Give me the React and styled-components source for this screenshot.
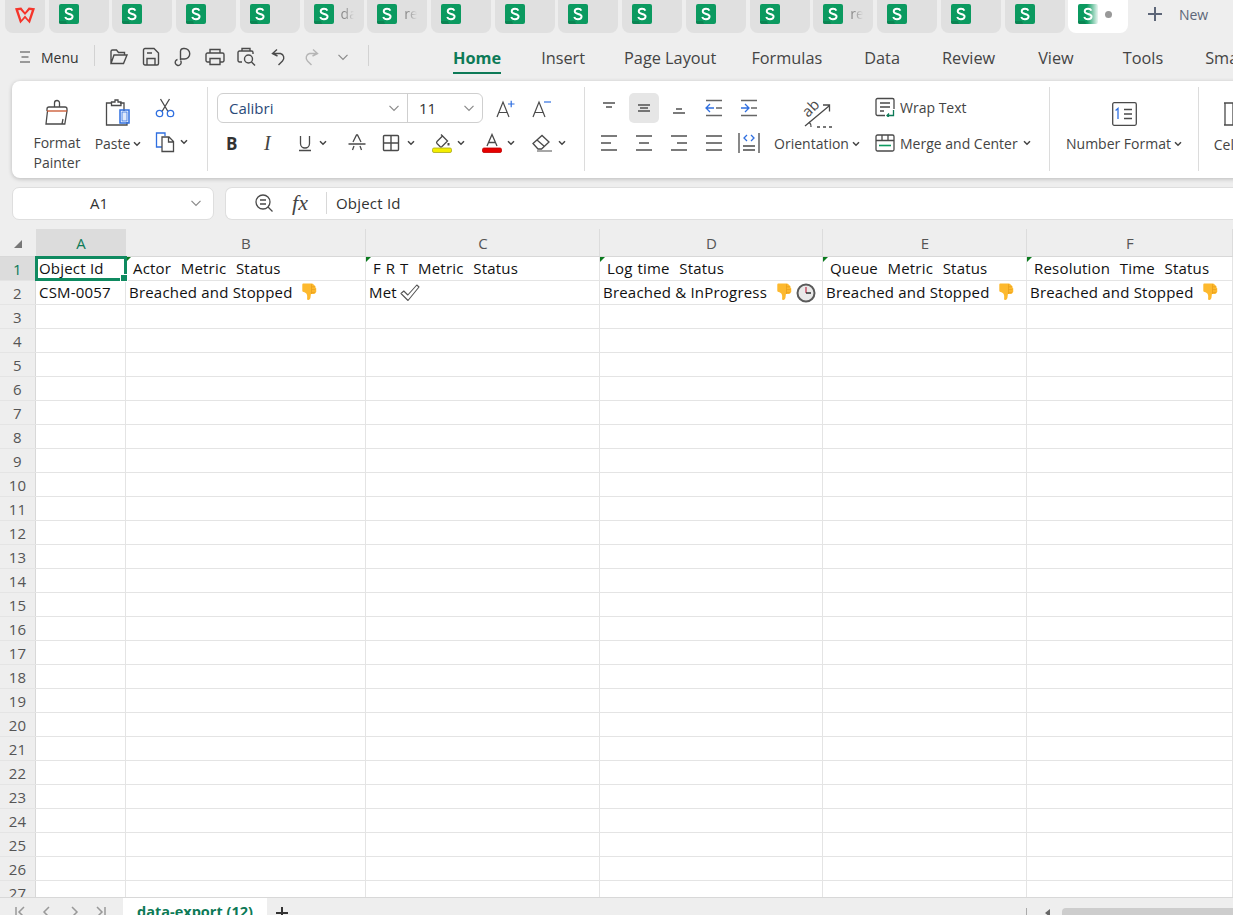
import styled, { createGlobalStyle } from "styled-components";

const GlobalStyle = createGlobalStyle`
  html, body {
    margin: 0;
    padding: 0;
    background: #eeeeee;
    overflow: hidden;
  }
  * {
    box-sizing: border-box;
  }
  svg {
    display: block;
    flex: none;
  }
`;

const UI_FONT = `"Open Sans", "Noto Sans", sans-serif`;

// Page

const Page = styled.div`
  width: 1233px;
  height: 915px;
  overflow: hidden;
  display: flex;
  flex-direction: column;
  background: #eeeeee;
  font-family: ${UI_FONT};
  color: #444;
`;

// Window tabs

const TabBar = styled.div`
  height: 33px;
  flex: none;
  display: flex;
  gap: 3.72px;
  padding-left: 5px;
  align-items: stretch;
`;

const Tab = styled.div`
  width: ${(props) => props.$w || 60}px;
  flex: none;
  display: flex;
  align-items: flex-start;
  padding: 4px 0 0 10px;
  background: ${(props) => (props.$active ? "#fff" : "#e0e0e0")};
  border-radius: 0 0 8px 8px;
  position: relative;
  overflow: hidden;
`;

const LogoWrap = styled.span`
  margin-top: 3px;
`;

const TabLabel = styled.span`
  font-size: 14px;
  line-height: 20px;
  margin-left: 7px;
  width: 13px;
  overflow: hidden;
  color: #8c8c8c;
  mask-image: linear-gradient(90deg, #000 30%, transparent);
`;

const FadeOver = styled.div`
  position: absolute;
  left: 19px;
  top: 4px;
  width: 12px;
  height: 20px;
  background: linear-gradient(90deg, rgba(255, 255, 255, 0), #fff);
`;

const Dot = styled.span`
  position: absolute;
  left: 37px;
  top: 11px;
  width: 7px;
  height: 7px;
  border-radius: 50%;
  background: #999;
`;

const NewTab = styled.div`
  display: flex;
  align-items: center;
  height: 28px;
  margin-left: 15px;
  gap: 16px;
  font-size: 14px;
  color: #5d6678;
`;

// Menu row

const MenuRow = styled.div`
  height: 45px;
  flex: none;
  display: flex;
  align-items: center;
  padding-left: 19px;
  font-size: 16px;
`;

const MenuButton = styled.div`
  width: 75px;
  flex: none;
  display: flex;
  align-items: center;
  gap: 10px;
  padding-top: 3px;
  font-size: 14px;
  color: #333;
`;

const VDivider = styled.div`
  width: 1px;
  height: 21px;
  flex: none;
  background: #d2d2d2;
`;

const QuickTools = styled.div`
  width: 273px;
  flex: none;
  display: flex;
  align-items: center;
  padding: 2px 0 0 8px;
`;

const QuickSlot = styled.div`
  width: 32px;
  flex: none;
  display: flex;
  justify-content: center;
`;

const RibbonTabs = styled.div`
  display: flex;
  margin-left: 84px;
  white-space: nowrap;
`;

const RibbonTab = styled.div`
  position: relative;
  height: 45px;
  line-height: 51px;
  margin-left: ${(props) => props.$gap ?? 0}px;
  font-size: 16.3px;
  font-weight: ${(props) => (props.$active ? 700 : 400)};
  color: ${(props) => (props.$active ? "#0d7a57" : "#444")};
  &::after {
    content: "";
    display: ${(props) => (props.$active ? "block" : "none")};
    position: absolute;
    left: 0;
    right: 0;
    bottom: 4px;
    height: 2px;
    background: #0d7a57;
  }
`;

// Ribbon

const Ribbon = styled.div`
  height: 97px;
  flex: none;
  margin: 3px 0 0 12px;
  width: 1260px;
  display: flex;
  background: #fff;
  border-radius: 8px;
  box-shadow: 0 1px 4px rgba(0, 0, 0, 0.22);
  padding: 6px 0 7px;
  font-size: 14px;
  color: #444;
  white-space: nowrap;
`;

const Group = styled.div`
  width: ${(props) => props.$w}px;
  flex: none;
  display: flex;
  border-right: ${(props) => (props.$last ? "none" : "1px solid #dcdcdc")};
  padding: ${(props) => props.$pad || "0"};
`;

const BigTool = styled.div`
  width: ${(props) => props.$w}px;
  flex: none;
  margin-left: ${(props) => props.$ml ?? 0}px;
  display: flex;
  flex-direction: column;
  align-items: center;
  text-align: center;
  line-height: 20px;
  padding-top: 11px;
`;

const BigIcon = styled.div`
  height: 32px;
  margin-bottom: 5px;
  display: flex;
  align-items: center;
  justify-content: center;
`;

const Labelled = styled.div`
  display: flex;
  align-items: center;
  gap: ${(props) => props.$gap ?? 3}px;
  height: 20px;
`;

const BigLabel = styled(Labelled)`
  margin-top: -1px;
`;

const SmallStack = styled.div`
  display: flex;
  flex-direction: column;
  gap: 14px;
  margin-left: 6px;
  padding-top: 11px;
  align-items: flex-start;
`;

const FontColumn = styled.div`
  display: flex;
  flex-direction: column;
  gap: 10px;
  padding-top: 6px;
`;

const FontTop = styled.div`
  display: flex;
  align-items: center;
`;

const FontSelect = styled.div`
  width: 266px;
  height: 30px;
  display: grid;
  grid-template-columns: 190px 1fr;
  border: 1px solid #cfcfcf;
  border-radius: 6px;
  margin-right: 13px;
`;

const SelectCell = styled.div`
  display: flex;
  align-items: center;
  justify-content: space-between;
  padding: 0 6px 0 ${(props) => props.$pad}px;
  border-right: ${(props) => (props.$divided ? "1px solid #cfcfcf" : "none")};
  color: ${(props) => props.$color || "#333"};
  font-size: 15px;
`;

const FontSizeTools = styled.div`
  display: flex;
  gap: 17px;
`;

const FontBottom = styled.div`
  display: flex;
  align-items: center;
  height: 20px;
  padding-left: 9px;
`;

const FontTool = styled.div`
  width: ${(props) => props.$w}px;
  flex: none;
  display: flex;
  align-items: center;
  gap: ${(props) => props.$gap ?? 5}px;
`;

const BoldGlyph = styled(FontTool)`
  font-weight: 700;
  font-size: 17px;
  color: #333;
`;

const ItalicGlyph = styled(FontTool)`
  font-family: "Liberation Serif", serif;
  font-style: italic;
  font-size: 20px;
`;

const AlignGrid = styled.div`
  display: grid;
  grid-template-columns: repeat(5, 30px);
  column-gap: 5px;
  row-gap: 5px;
  padding-top: 6px;
  align-content: start;
`;

const AlignCell = styled.div`
  height: 30px;
  display: flex;
  align-items: center;
  justify-content: center;
  border-radius: 5px;
  background: ${(props) => (props.$on ? "#e6e6e6" : "transparent")};
`;

const WideLabels = styled.div`
  display: flex;
  flex-direction: column;
  gap: 16px;
  margin-left: 14px;
  padding-top: 10px;
`;

const WideRow = styled.div`
  display: flex;
  align-items: center;
  gap: 5px;
  height: 20px;
`;

// Formula bar

const FormulaRow = styled.div`
  height: 33px;
  flex: none;
  margin-top: 9px;
  display: flex;
  gap: 11px;
  padding-left: 12px;
`;

const NameBox = styled.div`
  width: 202px;
  flex: none;
  display: flex;
  align-items: center;
  justify-content: space-between;
  padding: 0 10px 2px 77px;
  background: #fff;
  border: 1px solid #dedede;
  border-radius: 7px;
  font-size: 15px;
  color: #333;
`;

const FormulaBox = styled.div`
  flex: 1;
  margin-right: -12px;
  display: flex;
  align-items: center;
  background: #fff;
  border: 1px solid #dedede;
  border-right: none;
  border-radius: 7px 0 0 7px;
  padding: 0 0 2px 28px;
  font-size: 15px;
  letter-spacing: 0.2px;
  color: #333;
`;

const Fx = styled.span`
  font-family: "Liberation Serif", serif;
  font-style: italic;
  font-size: 22px;
  line-height: 22px;
  width: 34px;
  margin-left: 18px;
  color: #444;
`;

const FormulaSep = styled.div`
  width: 1px;
  height: 22px;
  margin-right: 9px;
  background: #d8d8d8;
`;

// Sheet

const COLUMNS = "36px 90px 240px 234px 223px 204px 1fr";

const Sheet = styled.div`
  flex: 1;
  min-height: 0;
  margin-top: 9px;
  overflow: hidden;
  background: #fff;
  font-size: 15px;
  letter-spacing: 0.2px;
  color: #111;
`;

const HeaderRow = styled.div`
  display: grid;
  grid-template-columns: ${COLUMNS};
  height: 28px;
  background: #eeeeee;
  border-bottom: 1px solid #d8d8d8;
`;

const Corner = styled.div`
  display: flex;
  align-items: center;
  justify-content: center;
  padding-top: 3px;
`;

const ColHead = styled.div`
  display: flex;
  align-items: center;
  justify-content: center;
  padding: 1px 0 0 1px;
  border-right: 1px solid #dcdcdc;
  background: ${(props) => (props.$on ? "#dcdcdc" : "transparent")};
  color: ${(props) => (props.$on ? "#0d7a57" : "#555")};
`;

const Row = styled.div`
  display: grid;
  grid-template-columns: ${COLUMNS};
  height: 24px;
  border-bottom: 1px solid #e4e4e4;
`;

const RowHead = styled.div`
  display: flex;
  align-items: center;
  justify-content: center;
  background: ${(props) => (props.$on ? "#dcdcdc" : "#eeeeee")};
  border-right: 1px solid #d8d8d8;
  color: ${(props) => (props.$on ? "#0d7a57" : "#555")};
`;

const Cell = styled.div`
  position: relative;
  display: flex;
  align-items: center;
  padding: 0 0 1px ${(props) => props.$pad ?? 3}px;
  border-right: 1px solid #e4e4e4;
  white-space: pre;
  word-spacing: ${(props) => (props.$flag ? "0.7px" : "0")};
  &::before {
    content: "";
    display: ${(props) => (props.$flag ? "block" : "none")};
    position: absolute;
    left: 0;
    top: 0;
    border-top: 5px solid #0a7a1e;
    border-right: 5px solid transparent;
  }
`;

const Selection = styled.div`
  position: absolute;
  left: -1px;
  top: -1px;
  right: -2px;
  bottom: -1px;
  border: 3px solid #0f8a60;
  z-index: 1;
  &::after {
    content: "";
    position: absolute;
    right: -4px;
    bottom: -4px;
    width: 6px;
    height: 6px;
    background: #0f8a60;
    border: 1px solid #fff;
  }
`;

const CellIcon = styled.span`
  display: inline-flex;
  margin: 1px 0 0 ${(props) => props.$ml ?? 8}px;
`;

// Sheet tabs

const BottomBar = styled.div`
  height: 18px;
  flex: none;
  display: flex;
  align-items: flex-start;
  background: #eeeeee;
  border-top: 1px solid #d8d8d8;
  overflow: hidden;
`;

const SheetNav = styled.div`
  width: 123px;
  flex: none;
  display: flex;
  gap: 15px;
  padding: 7px 0 0 14px;
`;

const SheetTab = styled.div`
  width: 144px;
  height: 30px;
  flex: none;
  margin-top: -1px;
  background: #fff;
  text-align: center;
  font-size: 14.5px;
  font-weight: 700;
  line-height: 30px;
  color: #0d7a57;
`;

const AddSheet = styled.div`
  width: 30px;
  flex: none;
  padding: 8px 0 0 8px;
`;

const HScroll = styled.div`
  margin-left: auto;
  display: flex;
  align-items: flex-start;
  width: 207px;
  padding-top: 10px;
`;

const ScrollSep = styled.div`
  width: 1px;
  height: 12px;
  background: #aaa;
`;

const ScrollArrow = styled.div`
  margin: 1px 0 0 18px;
  border-top: 4px solid transparent;
  border-bottom: 4px solid transparent;
  border-right: 5px solid #666;
`;

const ScrollThumb = styled.div`
  flex: 1;
  height: 12px;
  margin-left: 12px;
  background: #cdcdcd;
  border-radius: 4px 0 0 0;
`;

// Icons

const Svg = ({ w = 20, h = 20, children, stroke = "#4a4a4a", sw = 1.3 }) => (
  <svg width={w} height={h} viewBox={`0 0 ${w} ${h}`} fill="none" stroke={stroke} strokeWidth={sw}>
    {children}
  </svg>
);

const Chevron = ({ w = 14, color = "#8a8a8a" }) => (
  <svg width={w} height="14" viewBox="0 0 14 14" fill="none" stroke={color} strokeWidth="1.2">
    <path d="M2.5 4.8 7 9.3l4.5-4.5" />
  </svg>
);

const MiniCaret = () => (
  <svg width="8" height="6" viewBox="0 0 8 6" fill="none" stroke="#444" strokeWidth="1.5">
    <path d="M1 1.2 4 4.2 7 1.2" />
  </svg>
);

const WpsLogo = () => (
  <svg width="20" height="17" viewBox="0 0 20 17">
    <path fill="#f5352b" fillRule="evenodd" d="M0 1.2 6.3.6 10 5.2 13.7.6 20 1.2 14.8 16.6 10 11.2 5.2 16.6ZM3.2 3.2 6.4 12.7 10 8.6 13.6 12.7 16.8 3.2 14.6 3 10 8 5.4 3Z" />
  </svg>
);

const SheetIcon = () => (
  <svg width="20" height="20" viewBox="0 0 20 20">
    <path fill="#0b9a60" d="M2 0h16a2 2 0 0 1 2 2v16a2 2 0 0 1-2 2H2a2 2 0 0 1-2-2V2a2 2 0 0 1 2-2Z" />
    <path fill="#0a8553" d="M0 17h7l1 3H2a2 2 0 0 1-2-2Z" />
    <path fill="none" stroke="#fff" strokeWidth="1.9" d="M13.4 6.6C12.8 5.3 11.6 4.7 10 4.7c-2 0-3.3 1-3.3 2.6 0 3.6 6.9 1.8 6.9 5.3 0 1.7-1.5 2.7-3.6 2.7-1.8 0-3.2-.8-3.8-2.3" />
  </svg>
);

const PainterIcon = () => (
  <Svg w={26} h={30}>
    <path d="M10.5 9V5a2.5 2.5 0 0 1 5 0v4" />
    <path d="M3 13v-2a2 2 0 0 1 2-2h16a2 2 0 0 1 2 2v2" />
    <path d="M3.5 13 2 26h16l1-5M23 13l-2.2 13H18" />
    <path d="M3 13h20" stroke="#c9532a" />
  </Svg>
);

const PasteIcon = () => (
  <Svg w={28} h={30}>
    <path d="M7 4H2.5v22H23v-3M20 12V4h-4" />
    <path d="M7.5 6.5V3H11V1h3v2h3v3.5Z" />
    <rect x="16" y="11" width="9" height="13" stroke="#2f6fe0" strokeWidth="1.5" />
    <rect x="18" y="13" width="5" height="9" stroke="#2f6fe0" fill="#dfe9fb" strokeWidth="0.8" />
  </Svg>
);

const ScissorsIcon = () => (
  <Svg w={20} h={20}>
    <path d="M5.5 1 13 13.5M14.500 1 7 13.5" />
    <circle cx="4.5" cy="15.500" r="3.2" stroke="#2f6fe0" />
    <circle cx="15.500" cy="15.500" r="3.2" stroke="#2f6fe0" />
  </Svg>
);

const CopyIcon = () => (
  <Svg w={20} h={21}>
    <path d="M7 15H1.500V1H10v3" stroke="#2f6fe0" />
    <path d="M7 5h7l4.500 4.500V19.500H7ZM13.500 5v5H18.500" />
  </Svg>
);

const GrowIcon = ({ up }) => (
  <Svg w={19} h={19} sw={1.2}>
    <path d="M1 18 7 3l6 15M2.800 13.500h8.400" />
    {up ? <path d="M12 5h6.500M15.200 1.800v6.500" stroke="#2f6fe0" /> : <path d="M12 3h7" stroke="#2f6fe0" />}
  </Svg>
);

const Strike = () => (
  <Svg w={18} h={18}>
    <path d="M.5 10h17M5 8l3.500-7h1L13 8M4.500 16 6 12M13.500 16 12 12" />
  </Svg>
);

const Underline = () => (
  <Svg w={14} h={18}>
    <path d="M2.500 2v7.500a4.500 4.500 0 0 0 9 0V2M1 16.500h12" />
  </Svg>
);

const BordersIcon = () => (
  <Svg w={18} h={18} sw={1.4}>
    <rect x="1.500" y="1.500" width="15" height="15" rx="1" />
    <path d="M9 1.500v15M1.500 9h15" />
  </Svg>
);

const FillIcon = () => (
  <Svg w={20} h={20}>
    <path d="M5 8.500 10.500 3l5 5-5.500 5.500a1.500 1.500 0 0 1-2 0L5 10.500a1.500 1.500 0 0 1 0-2ZM9 1.500 10.500 3" />
    <path d="M16.500 10v2.500" strokeWidth="2" />
    <rect x=".5" y="15" width="19" height="4.500" rx="1.500" fill="#f4ee00" stroke="#a8a81a" strokeWidth="0.8" />
  </Svg>
);

const ColorIcon = () => (
  <Svg w={20} h={20}>
    <path d="M5 13 10 1.500 15 13M6.500 9.500h7" />
    <rect x=".5" y="15" width="19" height="4.500" rx="1.500" fill="#e60000" stroke="#c00000" strokeWidth="0.8" />
  </Svg>
);

const EraserIcon = () => (
  <Svg w={21} h={18}>
    <path d="M1 9.500 10 1.500l7 6.500-7.500 7H6ZM5 6l7.500 6.500" />
    <path d="M5 17h15" stroke="#777" />
  </Svg>
);

// rows are [x1, x2, y] for each line of an alignment icon
const Lines = ({ rows, stroke = "#4f4f4f" }) => (
  <Svg w={20} h={18} stroke={stroke} sw={1.5}>
    {rows.map(([x1, x2, y]) => (
      <path key={`${x1}-${y}`} d={`M${x1} ${y}H${x2}`} />
    ))}
  </Svg>
);

const IndentIcon = ({ dir }) => (
  <Svg w={20} h={18}>
    <path d="M2 1.500h16M2 16.500h16M12 9h6" stroke="#666" />
    {dir === "out" ? <path d="M10 9H2M6 5 2 9l4 4" stroke="#2f6fe0" /> : <path d="M2 9h8M6 5l4 4-4 4" stroke="#2f6fe0" />}
  </Svg>
);

const DistributeIcon = () => (
  <Svg w={22} h={20}>
    <path d="M1 0v20M21 0v20M5 13h12M5 17h12" />
    <path d="M9 2 6 5l3 3M13 2l3 3-3 3" stroke="#2f6fe0" />
  </Svg>
);

const OrientationIcon = () => (
  <Svg w={30} h={30}>
    <text x="0" y="0" transform="translate(6 19) rotate(-45)" fontFamily="Open Sans, sans-serif" fontSize="15" fill="#4a4a4a" stroke="none">
      ab
    </text>
    <path d="M3 27 27 7M21 6h6.500v6.500" />
    <path d="M15 28h3M21 28h3M27 28h3M9 28a6 6 0 0 0-2-5" />
  </Svg>
);

const WrapIcon = () => (
  <Svg w={20} h={20}>
    <path d="M10 18.500H2.500A1.500 1.500 0 0 1 1 17V3a1.500 1.500 0 0 1 1.500-1.500h15A1.500 1.500 0 0 1 19 3v9M5 6h10M5 10h10M5 14h4" />
    <path d="M18.500 13v5.500H12M14 16.500l-2 2 2 2" stroke="#0d7a57" />
  </Svg>
);

const MergeIcon = () => (
  <Svg w={20} h={18}>
    <rect x="1" y="1" width="18" height="16" rx="1.500" />
    <path d="M1 6.500h18M7 1v5.500M13 1v5.500" />
    <path d="M4 11.500h12" stroke="#0d9a60" strokeWidth="1.6" />
  </Svg>
);

const NumberIcon = () => (
  <svg width="25" height="24" viewBox="0 0 25 24" fill="none" stroke="#4a4a4a" strokeWidth="1.3">
    <rect x=".7" y=".7" width="23.6" height="22.6" rx="1.5" />
    <path d="M6 17V6.500L3.600 8.500" stroke="#2f6fe0" />
    <path d="M12 7.500h8M12 12h8M12 16.500h8" />
  </svg>
);

const CellsIcon = () => (
  <Svg w={14} h={24}>
    <path d="M2 1h10M2 23h10M3 1v22M11 1v22" />
  </Svg>
);

const FolderIcon = () => (
  <Svg w={20} h={18} sw={1.4}>
    <path d="M2 15V3.500A1.500 1.500 0 0 1 3.500 2h4l2 2.500h6V7M2 15.500h12.500L18 7H5Z" />
  </Svg>
);

const SaveIcon = () => (
  <Svg w={18} h={20} sw={1.4}>
    <path d="M1.500 3A1.500 1.500 0 0 1 3 1.500h9L16.500 6v10.500A1.500 1.500 0 0 1 15 18H3a1.500 1.500 0 0 1-1.500-1.500ZM5 18v-6.500h8V18M5 6h5" />
  </Svg>
);

const LoopIcon = () => (
  <Svg w={18} h={20} sw={1.4}>
    <path d="M6.500 13V4a3 3 0 0 1 3-2.500h1a5 5 0 0 1 0 10.500h-4" />
    <path d="M6.500 13.500a3 3 0 1 1-3-1" />
  </Svg>
);

const PrintIcon = () => (
  <Svg w={20} h={18} sw={1.4}>
    <path d="M5 5V1.500h10V5M5 14H2.500A1.500 1.500 0 0 1 1 12.500v-6A1.500 1.500 0 0 1 2.500 5h15A1.500 1.500 0 0 1 19 6.500v6a1.500 1.500 0 0 1-1.500 1.500H15M5 10.500h10v6H5Z" />
  </Svg>
);

const PreviewIcon = () => (
  <Svg w={20} h={20} sw={1.4}>
    <path d="M5 4V1.500h8V4M5 15H2.500A1.500 1.500 0 0 1 1 13.500v-8A1.500 1.500 0 0 1 2.500 4h12A1.500 1.500 0 0 1 16 5.500V7" />
    <circle cx="11.500" cy="12" r="4" />
    <path d="M14.500 15 18 18.500" />
  </Svg>
);

const UndoIcon = ({ color = "#4a4a4a", flip }) => (
  <Svg w={16} h={18} sw={1.4} stroke={color}>
    <path transform={flip ? "matrix(-1 0 0 1 16 0)" : undefined} d="M6 1.500 1.500 5.500l5 2.500M2 5.500h7.500a4.500 4.500 0 0 1 2 7.500L7.500 17" />
  </Svg>
);

const ZoomSearch = () => (
  <Svg w={20} h={20}>
    <circle cx="9" cy="9" r="7" />
    <path d="M14 14l4.500 4.500M6 7h6M6 11h6" />
  </Svg>
);

const TriangleCorner = () => (
  <svg width="10" height="10" viewBox="0 0 10 10">
    <path fill="#777" d="M9 1v8H1Z" />
  </svg>
);

const ThumbDown = () => (
  <svg width="16" height="19" viewBox="0 0 15 19">
    <path fill="#fdb92e" d="M2 .5h8.200c1.500 0 2 .8 2.100 1.600 1.400.4 2 1.500 1.600 2.500 1 .6 1.200 1.700.7 2.500.5.900.3 2-.6 2.600-.4 1-1.300 1.300-2.300 1.300H9.400c-.3 1-.1 2.300-.4 3.600-.3 1.300-1 2.400-2.200 2.400-1 0-1.300-.8-1.200-1.800.2-1.500.2-3-.5-4.200-.6-1-2-1.600-3-1.900C1 8.900.8 8.400.8 7.600V1.700C.8 1 1.300.5 2 .5Z" />
    <path fill="none" stroke="#e8a01c" strokeWidth="0.8" d="M10 3.800h3.400M10 6.600h4M10 9.400h3.800M10 1.200v9.800" />
  </svg>
);

const ClockIcon = () => (
  <svg width="20" height="20" viewBox="0 0 20 20">
    <circle cx="10" cy="10" r="8.500" fill="#e9e9e9" stroke="#5a5a5a" strokeWidth="2" />
    <path d="M10 4v6" stroke="#c0304a" strokeWidth="1.200" fill="none" />
    <path d="M10 10h5" stroke="#222" strokeWidth="1.400" fill="none" />
  </svg>
);

const CheckMark = () => (
  <svg width="20" height="18" viewBox="0 0 20 18">
    <path fill="#fff" stroke="#555" strokeWidth="1.100" strokeLinejoin="round" d="M1 9.500 3.800 7 7.800 11 16.800 1 19 3 8 16.500Z" />
  </svg>
);

const tabs = [
  {}, {}, {}, {},
  { label: "da" },
  { label: "re" },
  {}, {}, {}, {}, {}, {},
  { label: "re" },
  {}, {}, {},
];

const ribbonTabs = [
  { label: "Insert", gap: 40 },
  { label: "Page Layout", gap: 39 },
  { label: "Formulas", gap: 35 },
  { label: "Data", gap: 42 },
  { label: "Review", gap: 42 },
  { label: "View", gap: 43 },
  { label: "Tools", gap: 49 },
  { label: "Smart Toolbox", gap: 42 },
];

const quickIcons = [
  <FolderIcon />,
  <SaveIcon />,
  <LoopIcon />,
  <PrintIcon />,
  <PreviewIcon />,
  <UndoIcon />,
  <UndoIcon flip color="#b5b5b5" />,
  <Chevron />,
];

const alignIcons = [
  <Lines rows={[[4, 16, 4], [7, 13, 8]]} />,
  <Lines rows={[[4, 16, 6], [6, 14, 9], [4, 16, 12]]} />,
  <Lines rows={[[7, 13, 10], [4, 16, 14]]} />,
  <IndentIcon dir="out" />,
  <IndentIcon dir="in" />,
  <Lines rows={[[2, 18, 2], [2, 12, 9], [2, 18, 16]]} />,
  <Lines rows={[[2, 18, 2], [5, 15, 9], [2, 18, 16]]} />,
  <Lines rows={[[2, 18, 2], [8, 18, 9], [2, 18, 16]]} />,
  <Lines rows={[[2, 18, 2], [2, 18, 9], [2, 18, 16]]} />,
  <DistributeIcon />,
];

const App = () => {
  const emptyRows = Array.from({ length: 25 }, (_, i) => i + 3);
  return (
    <>
      <GlobalStyle />
      <Page>
        <TabBar>
          <Tab $w={40}>
            <LogoWrap>
              <WpsLogo />
            </LogoWrap>
          </Tab>
          {tabs.map((t, i) => (
            <Tab key={i}>
              <SheetIcon />
              {t.label && <TabLabel>{t.label}</TabLabel>}
            </Tab>
          ))}
          <Tab $active>
            <SheetIcon />
            <FadeOver />
            <Dot />
          </Tab>
          <NewTab>
            <Svg w={16} h={16} stroke="#5d6678" sw={2}>
              <path d="M8 1v14M1 8h14" />
            </Svg>
            New
          </NewTab>
        </TabBar>

        <MenuRow>
          <MenuButton>
            <Svg w={12} h={14} stroke="#444" sw={1.2}>
              <path d="M1 2h10M2.500 7h7M1 12h10" />
            </Svg>
            Menu
          </MenuButton>
          <VDivider />
          <QuickTools>
            {quickIcons.map((icon, i) => (
              <QuickSlot key={i}>{icon}</QuickSlot>
            ))}
          </QuickTools>
          <VDivider />
          <RibbonTabs>
            <RibbonTab $active>Home</RibbonTab>
            {ribbonTabs.map((t) => (
              <RibbonTab key={t.label} $gap={t.gap}>
                {t.label}
              </RibbonTab>
            ))}
          </RibbonTabs>
        </MenuRow>

        <Ribbon>
          <Group $w={196} $pad="0 0 0 15px">
            <BigTool $w={60}>
              <BigIcon>
                <PainterIcon />
              </BigIcon>
              Format
              <br />
              Painter
            </BigTool>
            <BigTool $w={62}>
              <BigIcon>
                <PasteIcon />
              </BigIcon>
              <BigLabel>
                Paste <MiniCaret />
              </BigLabel>
            </BigTool>
            <SmallStack>
              <ScissorsIcon />
              <Labelled $gap={5}>
                <CopyIcon />
                <MiniCaret />
              </Labelled>
            </SmallStack>
          </Group>
          <Group $w={377} $pad="0 0 0 9px">
            <FontColumn>
              <FontTop>
                <FontSelect>
                  <SelectCell $divided $pad={11} $color="#2b4a78">
                    Calibri <Chevron />
                  </SelectCell>
                  <SelectCell $pad={11}>
                    11 <Chevron />
                  </SelectCell>
                </FontSelect>
                <FontSizeTools>
                  <GrowIcon up />
                  <GrowIcon />
                </FontSizeTools>
              </FontTop>
              <FontBottom>
                <BoldGlyph $w={38}>B</BoldGlyph>
                <ItalicGlyph $w={34}>I</ItalicGlyph>
                <FontTool $w={50} $gap={7}>
                  <Underline />
                  <MiniCaret />
                </FontTool>
                <FontTool $w={34}>
                  <Strike />
                </FontTool>
                <FontTool $w={50} $gap={7}>
                  <BordersIcon />
                  <MiniCaret />
                </FontTool>
                <FontTool $w={50}>
                  <FillIcon />
                  <MiniCaret />
                </FontTool>
                <FontTool $w={50}>
                  <ColorIcon />
                  <MiniCaret />
                </FontTool>
                <FontTool $w={40}>
                  <EraserIcon />
                  <MiniCaret />
                </FontTool>
              </FontBottom>
            </FontColumn>
          </Group>
          <Group $w={465} $pad="0 0 0 9px">
            <AlignGrid>
              {alignIcons.map((icon, i) => (
                <AlignCell key={i} $on={i === 1}>
                  {icon}
                </AlignCell>
              ))}
            </AlignGrid>
            <BigTool $w={88} $ml={9}>
              <BigIcon>
                <OrientationIcon />
              </BigIcon>
              <BigLabel>
                Orientation <MiniCaret />
              </BigLabel>
            </BigTool>
            <WideLabels>
              <WideRow>
                <WrapIcon />
                Wrap Text
              </WideRow>
              <WideRow>
                <MergeIcon />
                Merge and Center <MiniCaret />
              </WideRow>
            </WideLabels>
          </Group>
          <Group $w={149}>
            <BigTool $w={148}>
              <BigIcon>
                <NumberIcon />
              </BigIcon>
              <BigLabel>
                Number Format <MiniCaret />
              </BigLabel>
            </BigTool>
          </Group>
          <Group $w={60} $last $pad="0 0 0 15px">
            <BigTool $w={30}>
              <BigIcon>
                <CellsIcon />
              </BigIcon>
              Cells
            </BigTool>
          </Group>
        </Ribbon>

        <FormulaRow>
          <NameBox>
            A1
            <Chevron />
          </NameBox>
          <FormulaBox>
            <ZoomSearch />
            <Fx>fx</Fx>
            <FormulaSep />
            Object Id
          </FormulaBox>
        </FormulaRow>

        <Sheet>
          <HeaderRow>
            <Corner>
              <TriangleCorner />
            </Corner>
            <ColHead $on>A</ColHead>
            <ColHead>B</ColHead>
            <ColHead>C</ColHead>
            <ColHead>D</ColHead>
            <ColHead>E</ColHead>
            <ColHead>F</ColHead>
          </HeaderRow>
          <Row>
            <RowHead $on>1</RowHead>
            <Cell>
              Object Id
              <Selection />
            </Cell>
            <Cell $flag $pad={7}>Actor  Metric  Status</Cell>
            <Cell $flag $pad={7}>F R T  Metric  Status</Cell>
            <Cell $flag $pad={7}>Log time  Status</Cell>
            <Cell $flag $pad={7}>Queue  Metric  Status</Cell>
            <Cell $flag $pad={7}>Resolution  Time  Status</Cell>
          </Row>
          <Row>
            <RowHead>2</RowHead>
            <Cell>CSM-0057</Cell>
            <Cell>
              Breached and Stopped
              <CellIcon><ThumbDown /></CellIcon>
            </Cell>
            <Cell>
              Met
              <CellIcon $ml={3}><CheckMark /></CellIcon>
            </Cell>
            <Cell>
              Breached &amp; InProgress
              <CellIcon $ml={9}><ThumbDown /></CellIcon>
              <CellIcon $ml={4}><ClockIcon /></CellIcon>
            </Cell>
            <Cell>
              Breached and Stopped
              <CellIcon><ThumbDown /></CellIcon>
            </Cell>
            <Cell>
              Breached and Stopped
              <CellIcon><ThumbDown /></CellIcon>
            </Cell>
          </Row>
          {emptyRows.map((n) => (
            <Row key={n}>
              <RowHead>{n}</RowHead>
              <Cell />
              <Cell />
              <Cell />
              <Cell />
              <Cell />
              <Cell />
            </Row>
          ))}
        </Sheet>

        <BottomBar>
          <SheetNav>
            <Svg w={12} h={14} stroke="#999" sw={1.5}><path d="M2 2v10M10 2 5 7l5 5" /></Svg>
            <Svg w={12} h={14} stroke="#999" sw={1.5}><path d="M8 2 3 7l5 5" /></Svg>
            <Svg w={12} h={14} stroke="#999" sw={1.5}><path d="M4 2l5 5-5 5" /></Svg>
            <Svg w={12} h={14} stroke="#999" sw={1.5}><path d="M10 2v10M2 2l5 5-5 5" /></Svg>
          </SheetNav>
          <SheetTab>data-export (12)</SheetTab>
          <AddSheet>
            <Svg w={14} h={14} stroke="#333" sw={2}><path d="M7 1v12M1 7h12" /></Svg>
          </AddSheet>
          <HScroll>
            <ScrollSep />
            <ScrollArrow />
            <ScrollThumb />
          </HScroll>
        </BottomBar>
      </Page>
    </>
  );
};

export default App;
